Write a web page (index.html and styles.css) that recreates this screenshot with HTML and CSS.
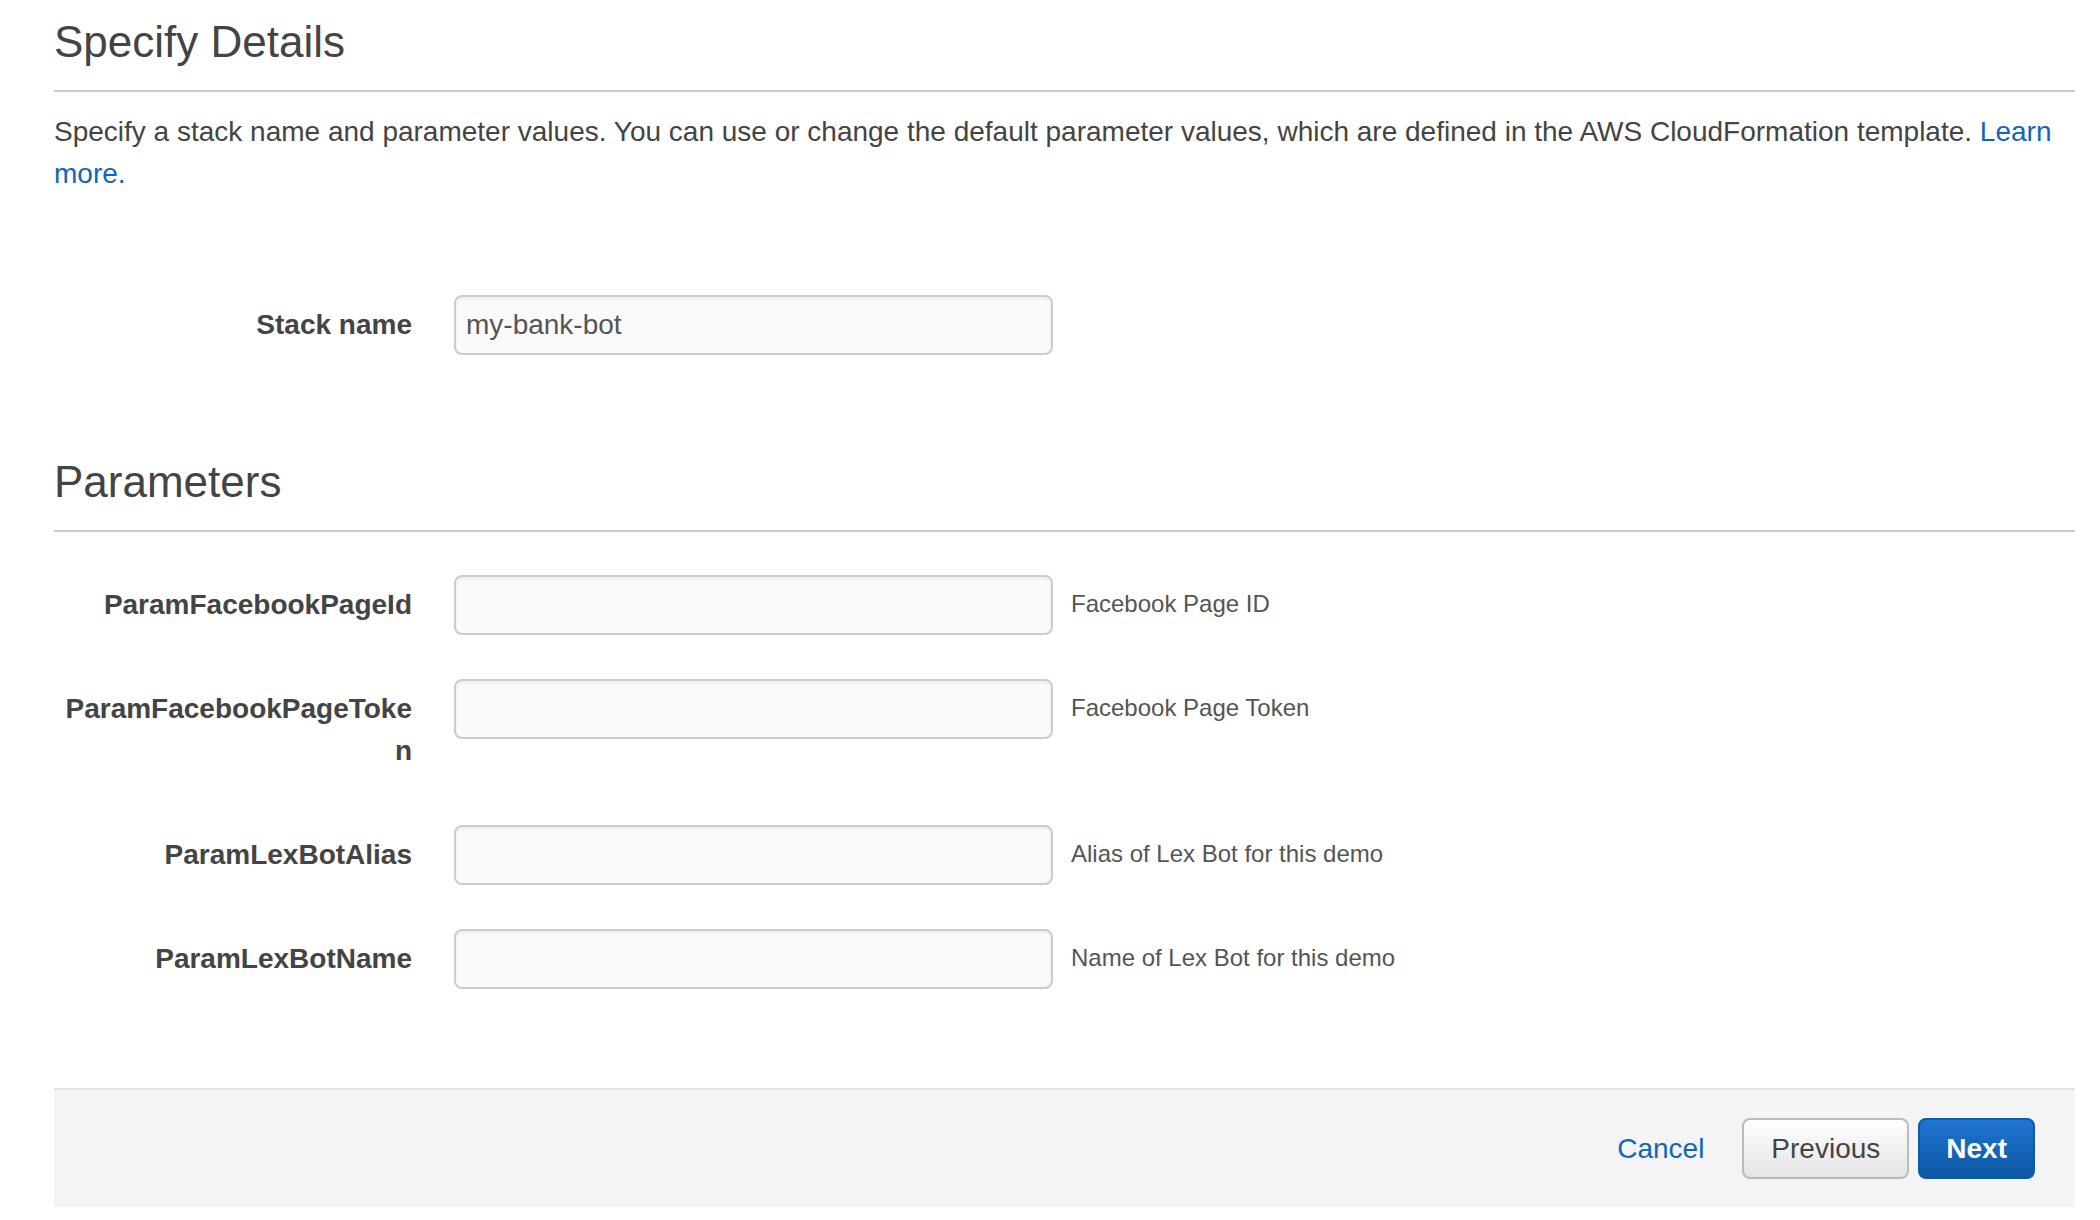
FILE: index.html
```html
<!DOCTYPE html>
<html lang="en">
<head>
<meta charset="utf-8">
<title>Specify Details</title>
<link rel="stylesheet" href="styles.css">
</head>
<body>
<div class="page">
  <h1 class="section-title first">Specify Details</h1>
  <p class="intro">Specify a stack name and parameter values. You can use or change the default parameter values, which are defined in the AWS CloudFormation template. <a class="link" href="#">Learn</a> <a class="link" href="#">more.</a></p>

  <div class="form-row stack-row">
    <label class="field-label">Stack name</label>
    <div class="input">my-bank-bot</div>
  </div>

  <h2 class="section-title second">Parameters</h2>

  <div class="params">
    <div class="form-row">
      <label class="field-label">ParamFacebookPageId</label>
      <div class="input"></div>
      <span class="help">Facebook Page ID</span>
    </div>
    <div class="form-row">
      <label class="field-label">ParamFacebookPageToken</label>
      <div class="input"></div>
      <span class="help">Facebook Page Token</span>
    </div>
    <div class="form-row">
      <label class="field-label">ParamLexBotAlias</label>
      <div class="input"></div>
      <span class="help">Alias of Lex Bot for this demo</span>
    </div>
    <div class="form-row">
      <label class="field-label">ParamLexBotName</label>
      <div class="input"></div>
      <span class="help">Name of Lex Bot for this demo</span>
    </div>
  </div>

  <div class="footer">
    <a class="cancel" href="#">Cancel</a>
    <button class="btn btn-secondary">Previous</button>
    <button class="btn btn-primary">Next</button>
  </div>
</div>
</body>
</html>
```

FILE: styles.css
```css
html, body {
  margin: 0;
  padding: 0;
  background: #ffffff;
}

body {
  font-family: "Liberation Sans", Arial, Helvetica, sans-serif;
  color: #444444;
}

.page {
  padding: 0 25px 0 54px;
}

.section-title {
  font-size: 44px;
  font-weight: 400;
  line-height: 52px;
  color: #444444;
  margin: 0;
  padding-bottom: 22px;
  border-bottom: 2px solid #cccccc;
}

.section-title.first {
  margin-top: 16px;
}

.section-title.second {
  margin-top: 101px;
}

.intro {
  font-size: 28px;
  line-height: 42px;
  margin: 19px 0 0;
  color: #444444;
}

.link {
  color: #1166bb;
  text-decoration: none;
}

.form-row {
  display: flex;
  align-items: flex-start;
}

.stack-row {
  margin-top: 100px;
}

.params {
  margin-top: 43px;
  display: flex;
  flex-direction: column;
  gap: 44px;
}

.field-label {
  flex: 0 0 358px;
  width: 358px;
  text-align: right;
  font-size: 28px;
  font-weight: 700;
  line-height: 42px;
  padding: 9px 0 9px;
  color: #444444;
  word-break: break-all;
  overflow-wrap: anywhere;
}

.input {
  flex: 0 0 auto;
  box-sizing: border-box;
  width: 599px;
  height: 60px;
  margin-left: 42px;
  border: 2px solid #cccccc;
  border-radius: 8px;
  background: #fafafa;
  box-shadow: inset 0 2px 3px rgba(0, 0, 0, 0.06);
  padding: 0 10px;
  font-size: 28px;
  line-height: 56px;
  color: #555555;
}

.help {
  margin-left: 18px;
  padding-top: 12px;
  font-size: 24px;
  line-height: 34px;
  color: #555555;
}

.footer {
  margin-top: 99px;
  display: flex;
  justify-content: flex-end;
  align-items: center;
  background: #f4f4f4;
  border-top: 2px solid #e3e3e3;
  padding: 28px 40px 28px 0;
}

.cancel {
  font-size: 28px;
  color: #1166bb;
  text-decoration: none;
  margin-right: 38px;
}

.btn {
  box-sizing: border-box;
  height: 61px;
  font-family: "Liberation Sans", Arial, Helvetica, sans-serif;
  font-size: 28px;
  border-radius: 8px;
  border: 2px solid;
  cursor: pointer;
}

.btn-secondary {
  padding: 0 27px;
  color: #444444;
  border-color: #bbbbbb;
  background: linear-gradient(#ffffff, #e3e3e3);
  margin-right: 9px;
}

.btn-primary {
  padding: 0 26px;
  color: #ffffff;
  font-weight: 700;
  border-color: #0d5aa6;
  background: linear-gradient(#1f75d0, #0b57a4);
}
```
